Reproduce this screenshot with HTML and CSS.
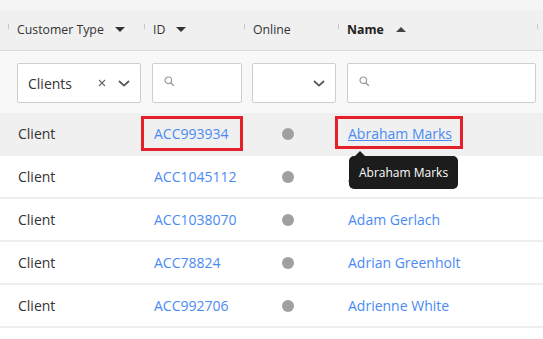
FILE: index.html
```html
<!DOCTYPE html>
<html lang="en">
<head>
  <meta charset="UTF-8">
  <title>Customers</title>
  <link rel="stylesheet" href="styles.css">
</head>
<body>
  <div class="grid">
    <div class="top-band"></div>

    <!-- header -->
    <div class="row head">
      <div class="hcell">Customer Type <span class="sort down"></span></div>
      <div class="hcell">ID <span class="sort down"></span></div>
      <div class="hcell">Online</div>
      <div class="hcell bold">Name <span class="sort up"></span></div>
    </div>

    <!-- filters -->
    <div class="row filters">
      <div class="fcell">
        <div class="box select">
          <span class="val">Clients</span>
          <svg class="clear" width="8" height="8" viewBox="0 0 8 8"><path d="M1 1L7 7M7 1L1 7" stroke="#666" stroke-width="1.1" fill="none"/></svg>
          <svg class="chev" width="12" height="7" viewBox="0 0 12 7"><path d="M1 1L6 5.6L11 1" stroke="#555" stroke-width="1.7" fill="none"/></svg>
        </div>
      </div>
      <div class="fcell mid">
        <div class="box search">
          <svg width="11" height="11" viewBox="0 0 11 11"><circle cx="4.3" cy="4.3" r="3.3" stroke="#9a9a9a" stroke-width="1.2" fill="none"/><path d="M6.7 6.7L9.8 9.8" stroke="#9a9a9a" stroke-width="1.4"/></svg>
        </div>
      </div>
      <div class="fcell mid">
        <div class="box select end">
          <svg class="chev" width="12" height="7" viewBox="0 0 12 7"><path d="M1 1L6 5.6L11 1" stroke="#555" stroke-width="1.7" fill="none"/></svg>
        </div>
      </div>
      <div class="fcell last">
        <div class="box search">
          <svg width="11" height="11" viewBox="0 0 11 11"><circle cx="4.3" cy="4.3" r="3.3" stroke="#9a9a9a" stroke-width="1.2" fill="none"/><path d="M6.7 6.7L9.8 9.8" stroke="#9a9a9a" stroke-width="1.4"/></svg>
        </div>
      </div>
    </div>

    <!-- data rows -->
    <div class="row data hover">
      <div class="cell">Client</div>
      <div class="cell"><a class="link marked id-mark">ACC993934</a></div>
      <div class="cell"><span class="dot"></span></div>
      <div class="cell name-cell">
        <a class="link under marked name-mark">Abraham Marks</a>
        <div class="tooltip">Abraham Marks</div>
      </div>
    </div>
    <div class="row data">
      <div class="cell">Client</div>
      <div class="cell"><a class="link">ACC1045112</a></div>
      <div class="cell"><span class="dot"></span></div>
      <div class="cell"><a class="link">Adam Treuter</a></div>
    </div>
    <div class="row data">
      <div class="cell">Client</div>
      <div class="cell"><a class="link">ACC1038070</a></div>
      <div class="cell"><span class="dot"></span></div>
      <div class="cell"><a class="link">Adam Gerlach</a></div>
    </div>
    <div class="row data">
      <div class="cell">Client</div>
      <div class="cell"><a class="link">ACC78824</a></div>
      <div class="cell"><span class="dot"></span></div>
      <div class="cell"><a class="link">Adrian Greenholt</a></div>
    </div>
    <div class="row data">
      <div class="cell">Client</div>
      <div class="cell"><a class="link">ACC992706</a></div>
      <div class="cell"><span class="dot"></span></div>
      <div class="cell"><a class="link">Adrienne White</a></div>
    </div>
  </div>
</body>
</html>
```

FILE: styles.css
```css
* {
  margin: 0;
  padding: 0;
  box-sizing: border-box;
}
body {
  font-family: 'Open Sans', sans-serif;
  background: #fff;
  color: #333;
  width: 543px;
  height: 339px;
  overflow: hidden;
}
.top-band {
  height: 10px;
  background: #f5f5f5;
}
/* baris dasar */
.row {
  display: grid;
  grid-template-columns: 136px 100px 94px 199px;
  padding-left: 8px;
  position: relative;
}
/* header */
.head {
  height: 41px;
  background: #f0f0f0;
  border-bottom: 1px solid #dadada;
  font-size: 12.3px;
  color: #333;
}
.head::after {
  content: '';
  position: absolute;
  left: 537px;
  top: 14px;
  width: 1px;
  height: 5px;
  background: #c8c8c8;
}
.hcell {
  position: relative;
  display: flex;
  align-items: center;
  padding-left: 9px;
  padding-bottom: 1px;
}
.hcell::before {
  content: '';
  position: absolute;
  left: 0;
  top: 14px;
  width: 1px;
  height: 5px;
  background: #c8c8c8;
}
.bold {
  font-weight: bold;
  color: #222;
}
.sort {
  display: inline-block;
  width: 0;
  height: 0;
  margin-left: 11px;
  border-left: 5px solid transparent;
  border-right: 5px solid transparent;
}
.sort.down {
  border-top: 5px solid #333;
}
.sort.up {
  border-bottom: 5px solid #444;
  margin-left: 12px;
}
/* filter */
.filters {
  height: 62px;
  background: #f8f8f8;
  padding-top: 12px;
}
.fcell {
  padding-left: 9px;
  padding-right: 3px;
}
.fcell.mid {
  padding-left: 8px;
  padding-right: 2px;
}
.fcell.last {
  padding-right: 1px;
}
.box {
  height: 40px;
  background: #fff;
  border: 1px solid #cfcfcf;
  border-radius: 2px;
  display: flex;
  align-items: center;
}
.select {
  padding: 0 10px 0 10px;
  font-size: 14px;
  color: #333;
}
.select .val {
  flex: 1;
}
.select.end {
  justify-content: flex-end;
}
.clear {
  margin-right: 12px;
}
.search {
  padding-left: 11px;
  padding-bottom: 4px;
}
/* data */
.data {
  height: 43px;
  border-bottom: 2px solid #eeeeee;
  font-size: 14px;
}
.data.hover {
  background: #f0f0f0;
  border-bottom-color: #f0f0f0;
}
.cell {
  display: flex;
  align-items: center;
  padding-left: 10px;
  position: relative;
}
.link {
  color: #4a8af4;
  text-decoration: none;
}
.link.under {
  text-decoration: underline;
}
.marked {
  position: relative;
}
.marked::after {
  content: '';
  position: absolute;
  top: -8px;
  bottom: -8px;
  border: 3px solid #e5202a;
}
.id-mark::after {
  left: -13px;
  right: -14px;
}
.name-mark::after {
  left: -13px;
  right: -11px;
  bottom: -6px;
}
.dot {
  display: block;
  width: 12px;
  height: 12px;
  border-radius: 50%;
  background: #a0a0a0;
  margin-left: 28px;
}
/* tooltip */
.tooltip {
  position: absolute;
  left: 11px;
  top: 43px;
  z-index: 3;
  background: #1c1c1c;
  color: #fff;
  font-size: 12px;
  height: 33px;
  line-height: 33px;
  padding: 0 10px;
  border-radius: 5px;
  white-space: nowrap;
}
.tooltip::before {
  content: '';
  position: absolute;
  left: 6px;
  top: -5px;
  border-left: 5px solid transparent;
  border-right: 5px solid transparent;
  border-bottom: 5px solid #1c1c1c;
}
```
